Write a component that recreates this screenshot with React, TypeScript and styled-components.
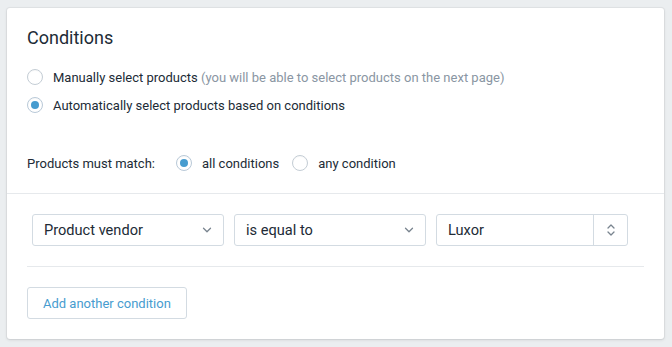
import React from 'react';
import styled, { createGlobalStyle } from 'styled-components';

const GlobalStyle = createGlobalStyle`
  html, body {
    margin: 0;
    padding: 0;
    background: #ebeef0;
  }
  body {
    padding: 8px 8px 8px 7px;
    font-family: Roboto, "Liberation Sans", Arial, sans-serif;
    color: #212b36;
    -webkit-font-smoothing: antialiased;
  }
`;

const Card = styled.div`
  width: 657px;
  background: #fff;
  border-radius: 3px;
  box-shadow: 0 0 0 1px rgba(63, 63, 68, 0.05), 0 1px 3px 0 rgba(63, 63, 68, 0.15);
`;

const Section = styled.div<{ $bordered?: boolean }>`
  padding: 20px;
  border-top: ${(p) => (p.$bordered ? '1px solid #e6e9ec' : 'none')};
`;

const Title = styled.h2`
  margin: 0;
  font-size: 18px;
  line-height: 20px;
  font-weight: 400;
  color: #212b36;
`;

const ChoiceList = styled.div`
  display: flex;
  flex-direction: column;
  gap: 8px;
  margin-top: 19px;
`;

const Choice = styled.label<{ $gap?: number }>`
  display: flex;
  align-items: center;
  gap: 10px;
  height: 20px;
  font-size: 13px;
  color: #212b36;
  margin-right: ${(p) => p.$gap ?? 0}px;
`;

const RadioDot = styled.span<{ $checked?: boolean }>`
  position: relative;
  flex: none;
  width: 16px;
  height: 16px;
  box-sizing: border-box;
  border-radius: 50%;
  border: 1px solid ${(p) => (p.$checked ? '#b9c9d8' : '#c4cdd5')};
  background: #fff;
  box-shadow: inset 0 1px 1px rgba(0, 0, 0, 0.03);

  &::after {
    content: '';
    display: ${(p) => (p.$checked ? 'block' : 'none')};
    position: absolute;
    left: 3px;
    top: 3px;
    width: 8px;
    height: 8px;
    border-radius: 50%;
    background: #479ccf;
  }
`;

const Hint = styled.span`
  color: #8a96a3;
`;

const MatchRow = styled.div`
  display: flex;
  align-items: center;
  margin-top: 38px;
`;

const MatchLabel = styled.span`
  font-size: 13px;
  color: #212b36;
  margin-right: 21px;
`;

const ConditionRow = styled.div`
  display: grid;
  grid-template-columns: repeat(3, 1fr);
  column-gap: 10px;
  margin: 0 16px 0 5px;
`;

const Field = styled.div`
  display: flex;
  align-items: center;
  height: 32px;
  box-sizing: border-box;
  border: 1px solid #d3dbe2;
  border-radius: 3px;
  background: #fff;
  font-size: 14.6px;
  color: #212b36;
`;

const FieldText = styled.span`
  flex: 1;
  padding-left: 11px;
`;

const Chevron = styled.span`
  display: flex;
  align-items: center;
  justify-content: center;
  width: 32px;
  color: #79848f;
`;

const Stepper = styled.span`
  display: flex;
  align-items: center;
  justify-content: center;
  align-self: stretch;
  width: 33px;
  border-left: 1px solid #d3dbe2;
  color: #79848f;
`;

const Rule = styled.hr`
  border: 0;
  border-top: 1px solid #e6e9ec;
  margin: 20px 0;
`;

const Button = styled.button`
  height: 32px;
  padding: 0 15px;
  border: 1px solid #d3dbe2;
  border-radius: 3px;
  background: #fff;
  font-family: inherit;
  font-size: 13px;
  color: #479ccf;
  cursor: pointer;
`;

function ChevronDown() {
  return (
    <svg width="10" height="6" viewBox="0 0 10 6" fill="none">
      <path d="M1.5 1.2l3.5 3.5 3.5-3.5" stroke="currentColor" strokeWidth="1.3" strokeLinecap="round" strokeLinejoin="round" />
    </svg>
  );
}

function UpDown() {
  return (
    <svg width="10" height="14" viewBox="0 0 10 14" fill="none">
      <path d="M2 5l3-3 3 3M2 9l3 3 3-3" stroke="currentColor" strokeWidth="1.3" strokeLinecap="round" strokeLinejoin="round" />
    </svg>
  );
}

export default function App() {
  return (
    <>
      <GlobalStyle />
      <Card>
        <Section>
          <Title>Conditions</Title>
          <ChoiceList>
            <Choice>
              <RadioDot />
              <span>
                Manually select products <Hint>(you will be able to select products on the next page)</Hint>
              </span>
            </Choice>
            <Choice>
              <RadioDot $checked />
              <span>Automatically select products based on conditions</span>
            </Choice>
          </ChoiceList>
          <MatchRow>
            <MatchLabel>Products must match:</MatchLabel>
            <Choice $gap={13}>
              <RadioDot $checked />
              <span>all conditions</span>
            </Choice>
            <Choice>
              <RadioDot />
              <span>any condition</span>
            </Choice>
          </MatchRow>
        </Section>
        <Section $bordered>
          <ConditionRow>
            <Field>
              <FieldText>Product vendor</FieldText>
              <Chevron><ChevronDown /></Chevron>
            </Field>
            <Field>
              <FieldText>is equal to</FieldText>
              <Chevron><ChevronDown /></Chevron>
            </Field>
            <Field>
              <FieldText>Luxor</FieldText>
              <Stepper><UpDown /></Stepper>
            </Field>
          </ConditionRow>
          <Rule />
          <Button>Add another condition</Button>
        </Section>
      </Card>
    </>
  );
}
